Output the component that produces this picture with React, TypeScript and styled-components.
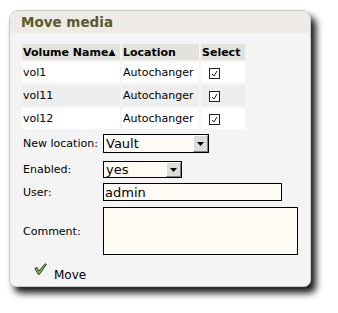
import React from "react";
import styled, { createGlobalStyle } from "styled-components";

const Global = createGlobalStyle`
  html, body { margin: 0; padding: 0; background: #ffffff; }
  body { font-family: "DejaVu Sans", "Liberation Sans", sans-serif; font-size: 11px; color: #000; }
`;

const Page = styled.div`
  padding: 10px 0 0 9px;
  width: 338px;
  height: 313px;
  box-sizing: border-box;
`;

const Panel = styled.div`
  width: 302px;
  height: 277px;
  box-sizing: border-box;
  border: 1px solid #c9c9c9;
  border-radius: 9px 9px 7px 7px;
  background: #f4f4f4;
  box-shadow: 5px 6px 7px rgba(0, 0, 0, 0.9);
  overflow: hidden;
`;

const Header = styled.div`
  height: 22px;
  background: #eeebe6;
  padding-left: 11px;
  font-size: 13.5px;
  font-weight: bold;
  color: #5b5a2c;
  line-height: 22px;
`;

const Body = styled.div`
  padding: 9px 10px 0 10px;
`;

const Table = styled.table`
  border-collapse: separate;
  border-spacing: 2px;
  font-size: 11px;
`;

const Th = styled.th<{ $w: number }>`
  width: ${(p) => p.$w}px;
  height: 16px;
  padding: 0 1px;
  box-sizing: border-box;
  background: #e4e2dd;
  text-align: left;
  font-weight: bold;
  white-space: nowrap;
`;

const SortArrow = styled.span`
  font-size: 9px;
  vertical-align: 1px;
`;

const Tr = styled.tr<{ $alt?: boolean }>`
  background: ${(p) => (p.$alt ? "#eeeeee" : "#ffffff")};
`;

const Td = styled.td<{ $check?: boolean }>`
  height: 21px;
  padding: ${(p) => (p.$check ? "0 0 0 8px" : "0 1px")};
  box-sizing: border-box;
  text-align: left;
  white-space: nowrap;
`;

const Box = styled.span`
  display: inline-flex;
  align-items: center;
  justify-content: center;
  width: 11px;
  height: 11px;
  box-sizing: border-box;
  border: 1px solid #222;
  background: #fff;
  vertical-align: middle;
`;

const Form = styled.div`
  margin: 3px 0 0 3px;
  display: grid;
  grid-template-columns: 80px auto;
  align-items: center;
`;

const Label = styled.div<{ $mt: number }>`
  margin-top: ${(p) => p.$mt}px;
  font-size: 11px;
`;

const Field = styled.div<{ $mt: number }>`
  margin-top: ${(p) => p.$mt}px;
  display: flex;
`;

const Select = styled.div<{ $w: number; $h: number }>`
  width: ${(p) => p.$w}px;
  height: ${(p) => p.$h}px;
  box-sizing: border-box;
  border: 1px solid #000;
  background: #fffaf4;
  display: flex;
  align-items: stretch;
  font-size: 13px;
`;

const SelectText = styled.span`
  flex: 1;
  padding-left: 2px;
  display: flex;
  align-items: center;
`;

const Arrow = styled.span`
  width: 15px;
  box-sizing: border-box;
  background: #dcdcdc;
  border-top: 1px solid #ffffff;
  border-left: 1px solid #ffffff;
  border-right: 1px solid #808080;
  border-bottom: 1px solid #808080;
  display: flex;
  align-items: center;
  justify-content: center;
`;

const Input = styled.div<{ $w: number; $h: number }>`
  width: ${(p) => p.$w}px;
  height: ${(p) => p.$h}px;
  box-sizing: border-box;
  border: 1px solid #000;
  background: #fffaf4;
  font-size: 13px;
  padding-left: 1px;
  display: flex;
  align-items: center;
`;

const MoveButton = styled.div`
  margin: 8px 0 0 14px;
  display: flex;
  align-items: flex-start;
  gap: 7px;
  font-size: 12px;
`;

const MoveText = styled.span`
  margin-top: 5px;
`;

const Tri = () => (
  <svg width="7" height="4" viewBox="0 0 7 4">
    <polygon points="0,0 7,0 3.5,4" fill="#000" />
  </svg>
);

const Check = () => (
  <svg width="9" height="9" viewBox="0 0 9 9">
    <polyline points="2,5 4,7 7,2" fill="none" stroke="#222" strokeWidth="1" />
  </svg>
);

const GreenCheck = () => (
  <svg width="13" height="12" viewBox="0 0 13 12">
    <path
      d="M0.8,5.5 L3,4.4 L5,8 L11.2,0.6 L12.4,1.4 L5.4,11.4 L4.3,11.4 Z"
      fill="#7fae5a"
      stroke="#2f4a1f"
      strokeWidth="1"
      strokeLinejoin="round"
    />
  </svg>
);

const rows = [
  { name: "vol1", loc: "Autochanger" },
  { name: "vol11", loc: "Autochanger" },
  { name: "vol12", loc: "Autochanger" },
];

export default function App() {
  return (
    <>
      <Global />
      <Page>
        <Panel>
          <Header>Move media</Header>
          <Body>
            <Table>
              <thead>
                <tr>
                  <Th $w={98}>
                    Volume Name<SortArrow>▲</SortArrow>
                  </Th>
                  <Th $w={77}>Location</Th>
                  <Th $w={44}>Select</Th>
                </tr>
              </thead>
              <tbody>
                {rows.map((r, i) => (
                  <Tr key={r.name} $alt={i % 2 === 1}>
                    <Td>{r.name}</Td>
                    <Td>{r.loc}</Td>
                    <Td $check>
                      <Box>
                        <Check />
                      </Box>
                    </Td>
                  </Tr>
                ))}
              </tbody>
            </Table>
            <Form>
              <Label $mt={0}>New location:</Label>
              <Field $mt={0}>
                <Select $w={106} $h={19}>
                  <SelectText>Vault</SelectText>
                  <Arrow>
                    <Tri />
                  </Arrow>
                </Select>
              </Field>
              <Label $mt={8}>Enabled:</Label>
              <Field $mt={8}>
                <Select $w={79} $h={17}>
                  <SelectText>yes</SelectText>
                  <Arrow>
                    <Tri />
                  </Arrow>
                </Select>
              </Field>
              <Label $mt={5}>User:</Label>
              <Field $mt={5}>
                <Input $w={179} $h={18}>admin</Input>
              </Field>
              <Label $mt={6}>Comment:</Label>
              <Field $mt={6}>
                <Input $w={195} $h={48} />
              </Field>
            </Form>
            <MoveButton>
              <GreenCheck />
              <MoveText>Move</MoveText>
            </MoveButton>
          </Body>
        </Panel>
      </Page>
    </>
  );
}
